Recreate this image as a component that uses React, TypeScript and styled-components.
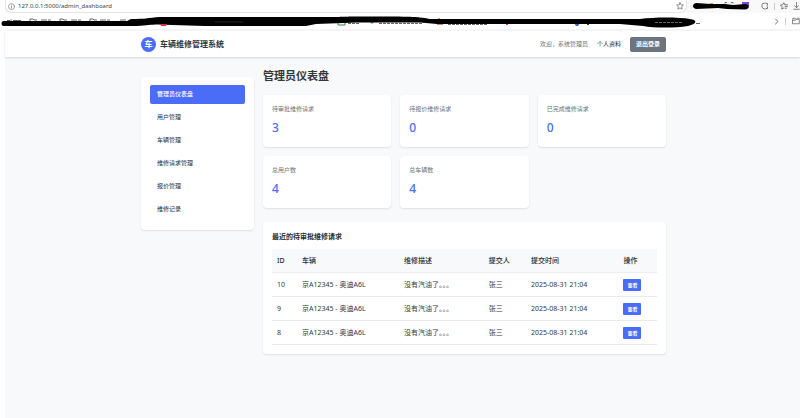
import React from "react";
import styled, { createGlobalStyle } from "styled-components";

const GlobalStyle = createGlobalStyle`
  *, *::before, *::after { box-sizing: border-box; }
  html { background: #fff; }
  body {
    margin: 0;
    font-family: "Noto Sans", "Noto Sans CJK SC", sans-serif;
    font-size: 7px;
    color: #282d32;
  }
  button, input { font-family: inherit; }
  h1, h2, p { margin: 0; }
`;

const Window = styled.div`
  display: flex;
  flex-direction: column;
  min-height: 100vh;
  overflow: hidden;
`;

const Browser = styled.div`
  position: relative;
  padding-left: 5px;
  background: #fff;
`;

const AddressRow = styled.div`
  display: flex;
  align-items: flex-start;
  height: 13px;
  background: #f9f9f9;
`;

const AddressBar = styled.div`
  flex: 1;
  display: flex;
  align-items: center;
  height: 13px;
  padding: 0 2px;
  background: #fff;
  border: 1px solid #e4e4e4;
  border-top: 0;
  border-radius: 0 0 7px 7px;
  svg { flex: none; }
`;

const AddressInput = styled.input`
  flex: 1;
  min-width: 0;
  height: 12px;
  margin-left: 3px;
  padding: 0;
  border: 0;
  outline: 0;
  background: transparent;
  font-size: 6px;
  line-height: 12px;
  color: #444;
`;

const ToolButtons = styled.div`
  display: flex;
  align-items: center;
  justify-content: flex-end;
  gap: 5px;
  width: 113px;
  height: 12px;
`;

const IconButton = styled.button`
  display: flex;
  padding: 0;
  border: 0;
  background: transparent;
  color: #555;
`;

const Divider = styled.span`
  width: 1px;
  height: 7px;
  background: #ccc;
`;

const Bookmarks = styled.div`
  display: flex;
  align-items: center;
  justify-content: flex-end;
  gap: 6px;
  height: 18px;
  border-bottom: 2px solid #f5f5f5;
`;

const Scribbles = styled.svg`
  position: absolute;
  top: 0;
  left: 0;
  width: 100%;
  height: 30px;
  pointer-events: none;
`;

const Page = styled.div`
  flex: 1;
  margin-left: 5px;
  background: #f8f9fb;
`;

const Header = styled.header`
  padding-left: 2px;
  background: #fff;
  box-shadow: 0 1px 2px rgba(0, 0, 0, 0.14);
`;

const Container = styled.div`
  max-width: 525px;
  margin: 0 auto;
`;

const HeaderInner = styled(Container)`
  display: flex;
  align-items: center;
  justify-content: space-between;
  height: 26px;
`;

const Brand = styled.a`
  display: flex;
  align-items: center;
  gap: 4px;
  font-size: 8px;
  line-height: 12px;
  font-weight: 600;
  color: #32373c;
  text-decoration: none;
`;

const Logo = styled.span`
  display: flex;
  align-items: center;
  justify-content: center;
  width: 15px;
  height: 15px;
  border-radius: 50%;
  background: #4a6cf7;
  color: #fff;
  font-size: 8px;
  font-weight: 700;
`;

const UserArea = styled.div`
  display: flex;
  align-items: center;
  gap: 9px;
  font-size: 6px;
  line-height: 9px;
  color: #6c757d;
`;

const ProfileLink = styled.a`
  color: #212529;
  text-decoration: none;
`;

const LogoutButton = styled.button`
  height: 15px;
  padding: 0 6px;
  border: 0;
  border-radius: 2px;
  background: #6c757d;
  color: #fff;
  font-size: 6px;
  line-height: 15px;
  font-weight: 600;
`;

const Body = styled.div`
  padding-left: 2px;
`;

const Layout = styled(Container)`
  display: grid;
  grid-template-columns: 113px minmax(0, 1fr);
  align-items: start;
  gap: 9px;
  padding-top: 10px;
`;

const Card = styled.section`
  background: #fff;
  border-radius: 4px;
  box-shadow: 0 1px 2px rgba(0, 0, 0, 0.1);
`;

const Sidebar = styled(Card).attrs({ as: "nav" })`
  display: flex;
  flex-direction: column;
  gap: 4px;
  margin-top: 10px;
  padding: 8px 9px 11px;
`;

const NavLink = styled.a<{ $active?: boolean }>`
  height: 19px;
  padding: 0 7px;
  border-radius: 2px;
  background: ${(p) => (p.$active ? "#4a6cf7" : "transparent")};
  color: ${(p) => (p.$active ? "#fff" : "#282d32")};
  font-size: 6px;
  line-height: 19px;
  font-weight: ${(p) => (p.$active ? 500 : 400)};
  text-decoration: none;
`;

const PageTitle = styled.h1`
  margin-bottom: 10px;
  font-size: 11px;
  line-height: 18px;
  font-weight: 600;
  color: #32373c;
`;

const Stats = styled.div`
  display: grid;
  grid-template-columns: repeat(3, minmax(0, 1fr));
  gap: 9px;
`;

const StatCard = styled(Card)`
  height: 52px;
  padding: 9px;
`;

const StatLabel = styled.p`
  font-size: 6px;
  line-height: 10px;
  color: #6c757d;
`;

const StatValue = styled.p`
  margin-top: 5px;
  font-size: 12px;
  line-height: 18px;
  font-weight: 500;
  color: #4a6cf7;
`;

const TableCard = styled(Card)`
  margin-top: 14px;
  padding: 9px;
`;

const TableTitle = styled.h2`
  margin-bottom: 6px;
  font-size: 7px;
  line-height: 12px;
  font-weight: 600;
`;

const Table = styled.table`
  width: 100%;
  table-layout: fixed;
  border-collapse: separate;
  border-spacing: 0;
`;

const Col = styled.col<{ $share: number }>`
  width: ${(p) => p.$share / 2}%;
`;

const HeadCell = styled.th`
  height: 24px;
  padding: 0 5px;
  border-bottom: 1px solid #eceef1;
  background: #f8f9fb;
  font-size: 7px;
  line-height: 10px;
  font-weight: 500;
  text-align: left;
  white-space: nowrap;
`;

const Cell = styled.td`
  height: 24px;
  padding: 0 5px;
  border-bottom: 1px solid #e9ebee;
  font-size: 7px;
  line-height: 10px;
  color: #33383d;
  white-space: nowrap;
`;

const ViewButton = styled.button`
  display: block;
  height: 12px;
  padding: 0 4px;
  border: 0;
  border-radius: 1px;
  background: #4a6cf7;
  color: #fff;
  font-size: 5px;
  line-height: 12px;
  font-weight: 700;
`;

const nav = ["管理员仪表盘", "用户管理", "车辆管理", "维修请求管理", "报价管理", "维修记录"];

const stats = [
  { label: "待审批维修请求", value: 3 },
  { label: "待报价维修请求", value: 0 },
  { label: "已完成维修请求", value: 0 },
  { label: "总用户数", value: 4 },
  { label: "总车辆数", value: 4 },
];

/* Shares are in two-hundredths of the table's width. */
const columns = [
  { label: "ID", share: 13 },
  { label: "车辆", share: 53 },
  { label: "维修描述", share: 44 },
  { label: "提交人", share: 22 },
  { label: "提交时间", share: 48 },
  { label: "操作", share: 20 },
];

const requests = [10, 9, 8].map((id) => ({
  id,
  car: "京A12345 - 奥迪A6L",
  note: "没有汽油了。。。",
  user: "张三",
  time: "2025-08-31 21:04",
}));

const line = { fill: "none", stroke: "currentColor", strokeLinejoin: "round", strokeLinecap: "round" } as const;

const InfoIcon = () => (
  <svg width="7" height="7" viewBox="0 0 14 14" color="#777" {...line} strokeWidth="1.3">
    <circle cx="7" cy="7" r="6" />
    <path d="M7 6.4v3.8M7 3.8v.4" />
  </svg>
);

const StarIcon = () => (
  <svg width="8" height="8" viewBox="0 0 16 16" {...line} strokeWidth="1.3">
    <path d="m8 1.3 2 4.4 4.8.5-3.6 3.2 1 4.8L8 11.8l-4.2 2.4 1-4.8L1.2 6.2 6 5.7z" />
  </svg>
);

const FavoritesIcon = () => (
  <svg width="8" height="8" viewBox="0 0 16 16" {...line} strokeWidth="1.5">
    <path d="M10 5.6 7.5 1.5 5.4 5.7.9 6.3l3.3 3.3-.8 4.5 4.1-2.1M10 5.6h5M10.5 9h4.2M10 12.4h3" />
  </svg>
);

const ExtensionIcon = () => (
  <svg width="8" height="8" viewBox="0 0 16 16" {...line} strokeWidth="1.5">
    <path d="M4 3h2.2a2 2 0 0 1 3.8 0H13v3.2a2 2 0 0 0 0 3.6V13h-3a2 2 0 0 1-3.8 0H4L2 10V6z" />
  </svg>
);

const DownloadIcon = () => (
  <svg width="7" height="8" viewBox="0 0 14 16" {...line} strokeWidth="1.4">
    <path d="M7 1v10M3 7.5 7 11l4-3.5M1.5 14.5h11" />
  </svg>
);

const ChevronIcon = () => (
  <svg width="5" height="7" viewBox="0 0 10 14" {...line} strokeWidth="1.7">
    <path d="m3 2 5 5-5 5" />
  </svg>
);

const FolderIcon = () => (
  <svg width="8" height="8" viewBox="0 0 16 16" {...line} strokeWidth="1.4">
    <path d="M1.5 4.5v-2h5L8 4.5h6.5v9h-13zM1.5 6.5H7l1.5-2M11 2.5h3.5" />
  </svg>
);

/* Marker strokes that redact the bookmarks and extensions, with slivers of what lies below. */
const Redactions = () => (
  <Scribbles viewBox="0 0 800 30" preserveAspectRatio="none" aria-hidden="true">
    <g fill="none" stroke="#666" strokeWidth="1">
      <path d="M7 20.5h3m1-1v2m2-1h8M41 20h4m1-1v2m2-1h3M71 20h4m1-1v2m2-1h3M100 20h4m1-1v2m2-1h3M120 20h6" />
      <path d="M30 21v-2h3l1 1h3M60 21v-2h3l1 1h3M90 21v-2h3l1 1h3" />
      <path d="M348 23.5h11M379 23.5h43M448 24.5h40" strokeDasharray="3 1" />
      <path d="M725 3.5v-1h2m4 0h2v1M696 23.5h4" />
    </g>
    <path d="M338 22v3h7v-3" fill="none" stroke="#2b8a3e" strokeWidth="1" />
    <path d="M370 22h4l-2 2z" fill="#20b090" />
    <path d="M438 18h2v1h-2zM710 3h3v1h-3z" fill="#e8954a" />
    <path d="M437 24h6v1h-6z" fill="#b98d70" />
    <path d="M506 23h2v2h-2z" fill="#e03060" />
    <path d="M574 23h6l-2 3h-2z" fill="#2468e5" />
    <path d="M587 23h2v2h-2z" fill="#333" />
    <path d="M742 2h7v4h-7z" fill="#8048d8" />
    <path
      d="M3 21C1 22 1 25 3 26L137 26C147 25.500 151 24.500 158 24.500L172 25L205 26L306 26L316 24L357 22.500L420 22.500L437 24L520 24L620 24L643 26C654 28 675 28 688 26C697 24 698 20 690 19C678 17 655 17 640 19L600 19L530 19L430 19C418 16 400 16.500 350 16.500C343 17 337 17 265 17L160 17C148 18 145 19 131 19L127 21Z"
      fill="#000"
    />
    <path d="M160 24h7l-1 2h-5z" fill="#d9303e" />
    <path d="M655 22.500h27" stroke="#666" strokeWidth="1" strokeDasharray="3 1" />
    <path d="M215 22h28" stroke="#252525" strokeWidth="1" />
    <path d="M696 3C692 4 692 8 696 9L718 8L727 9L745 9.500C750 9 750 5 746 4L733 5L725 4L711 4Z" fill="#000" />
  </Scribbles>
);

export default function App() {
  return (
    <Window>
      <GlobalStyle />
      <Browser>
        <AddressRow>
          <AddressBar>
            <InfoIcon />
            <AddressInput aria-label="地址" defaultValue="127.0.0.1:5000/admin_dashboard" />
            <IconButton aria-label="收藏此页"><StarIcon /></IconButton>
          </AddressBar>
          <ToolButtons>
            <IconButton aria-label="扩展"><ExtensionIcon /></IconButton>
            <Divider />
            <IconButton aria-label="收藏夹"><FavoritesIcon /></IconButton>
            <IconButton aria-label="下载"><DownloadIcon /></IconButton>
          </ToolButtons>
        </AddressRow>
        <Bookmarks>
          <IconButton aria-label="更多书签"><ChevronIcon /></IconButton>
          <Divider />
          <IconButton aria-label="其他收藏夹"><FolderIcon /></IconButton>
        </Bookmarks>
        <Redactions />
      </Browser>
      <Page>
        <Header>
          <HeaderInner>
            <Brand href="#">
              <Logo>车</Logo>
              车辆维修管理系统
            </Brand>
            <UserArea>
              <span>欢迎，系统管理员</span>
              <ProfileLink href="#profile">个人资料</ProfileLink>
              <LogoutButton>退出登录</LogoutButton>
            </UserArea>
          </HeaderInner>
        </Header>
        <Body>
          <Layout>
            <Sidebar>
              {nav.map((label, i) => (
                <NavLink key={label} href="#" $active={i === 0}>{label}</NavLink>
              ))}
            </Sidebar>
            <main>
              <PageTitle>管理员仪表盘</PageTitle>
              <Stats>
                {stats.map((s) => (
                  <StatCard key={s.label}>
                    <StatLabel>{s.label}</StatLabel>
                    <StatValue>{s.value}</StatValue>
                  </StatCard>
                ))}
              </Stats>
              <TableCard>
                <TableTitle>最近的待审批维修请求</TableTitle>
                <Table>
                  <colgroup>
                    {columns.map((c) => <Col key={c.label} $share={c.share} />)}
                  </colgroup>
                  <thead>
                    <tr>{columns.map((c) => <HeadCell key={c.label}>{c.label}</HeadCell>)}</tr>
                  </thead>
                  <tbody>
                    {requests.map((r) => (
                      <tr key={r.id}>
                        <Cell>{r.id}</Cell>
                        <Cell>{r.car}</Cell>
                        <Cell>{r.note}</Cell>
                        <Cell>{r.user}</Cell>
                        <Cell>{r.time}</Cell>
                        <Cell><ViewButton>查看</ViewButton></Cell>
                      </tr>
                    ))}
                  </tbody>
                </Table>
              </TableCard>
            </main>
          </Layout>
        </Body>
      </Page>
    </Window>
  );
}
